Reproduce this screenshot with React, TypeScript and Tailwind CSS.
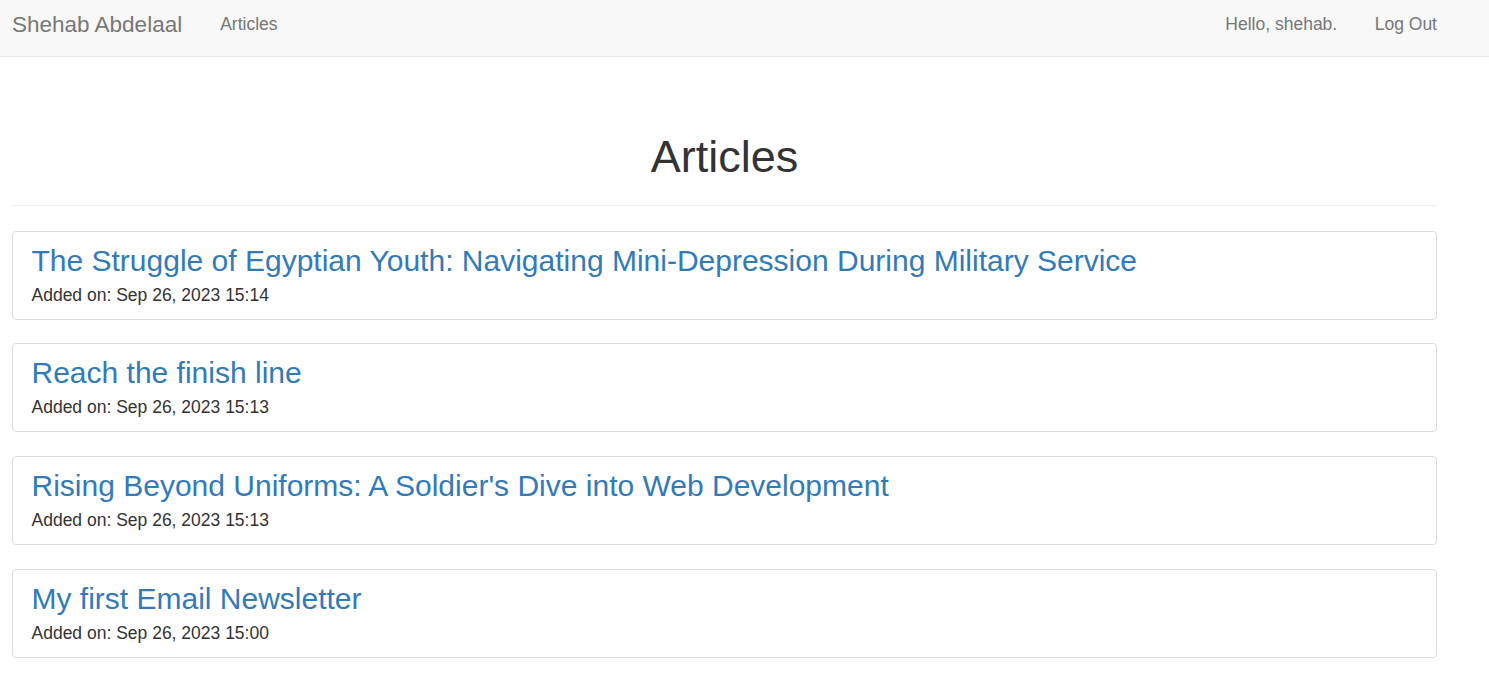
const articles = [
  {
    title: "The Struggle of Egyptian Youth: Navigating Mini-Depression During Military Service",
    added: "Sep 26, 2023 15:14",
  },
  { title: "Reach the finish line", added: "Sep 26, 2023 15:13" },
  {
    title: "Rising Beyond Uniforms: A Soldier's Dive into Web Development",
    added: "Sep 26, 2023 15:13",
  },
  { title: "My first Email Newsletter", added: "Sep 26, 2023 15:00" },
];

function Navbar() {
  return (
    <nav className="h-[57px] bg-[#f8f8f8] border-b border-[#e7e7e7] flex justify-between pl-[12px] pr-[52px]">
      <div className="flex">
        <a href="#" className="pt-[12px] text-[22.5px] leading-[25px] text-[#777]">
          Shehab Abdelaal
        </a>
        <a href="#" className="ml-[38px] pt-[12px] text-[17.5px] leading-[25px] text-[#777]">
          Articles
        </a>
      </div>
      <div className="flex gap-[37.5px]">
        <span className="pt-[12px] text-[17.5px] leading-[25px] text-[#777]">Hello, shehab.</span>
        <a href="#" className="pt-[12px] text-[17.5px] leading-[25px] text-[#777]">
          Log Out
        </a>
      </div>
    </nav>
  );
}

function ArticleCard({ title, added }: { title: string; added: string }) {
  return (
    <div className="border border-[#ddd] rounded-[4px] pl-[18.5px] pr-[19px] pt-[12px] pb-[11px]">
      <a href="#" className="block text-[30px] leading-[33px] text-[#337ab7] mb-[6px]">
        {title}
      </a>
      <div className="text-[17.5px] leading-[25px] text-[#333]">Added on: {added}</div>
    </div>
  );
}

export default function App() {
  return (
    <div className="min-h-screen bg-white font-['Liberation_Sans',Arial,sans-serif]">
      <Navbar />
      <main className="pl-[12px] pr-[52px]">
        <div className="mt-[75px] pb-[23px] border-b border-[#eee] text-center">
          <h1 className="text-[45px] leading-[49.5px] text-[#333]">Articles</h1>
        </div>
        <div className="mt-[25px] flex flex-col gap-[23.7px]">
          {articles.map((a) => (
            <ArticleCard key={a.title} title={a.title} added={a.added} />
          ))}
        </div>
      </main>
    </div>
  );
}
